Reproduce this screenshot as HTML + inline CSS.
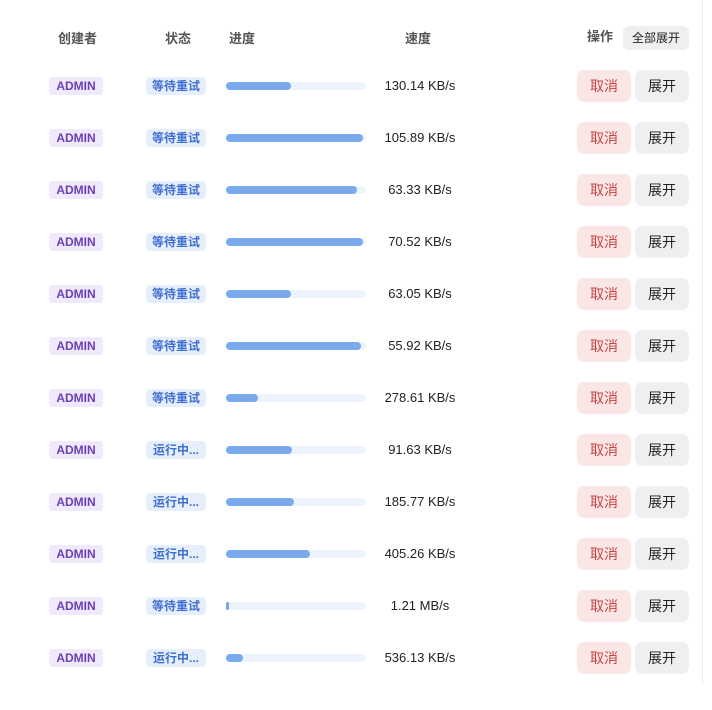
<!DOCTYPE html>
<html><head><meta charset="utf-8"><style>
body{margin:0;width:712px;height:685px;background:#fff;font-family:"Liberation Sans","Noto Sans CJK SC",sans-serif;position:relative;overflow:hidden}
.vl{position:absolute;left:702px;top:0;width:1px;height:685px;background:#f0f0f2}
.h{position:absolute;top:31px;font-size:13px;color:#555;font-weight:bold;line-height:16px}
.hb{position:absolute;left:623px;top:26px;width:66px;height:24px;border-radius:6px;background:#eeeff1;font-size:12px;color:#222;text-align:center;line-height:24px}
.r{position:absolute;left:0;width:712px;height:52px}
.ad{position:absolute;left:49px;top:-9px;width:54px;height:18px;border-radius:4px;background:#efe9fb;color:#6a40b5;font-size:12px;font-weight:bold;text-align:center;line-height:18px}
.st{position:absolute;left:146px;top:-9px;width:60px;height:18px;border-radius:4px;background:#e7effd;color:#3d6fd1;font-size:12px;font-weight:bold;text-align:center;line-height:18px}
.tr{position:absolute;left:226px;top:-4px;width:140px;height:8px;border-radius:4px;background:#eef4fd}
.fl{height:8px;border-radius:4px;background:#7aa9ec}
.sp{position:absolute;left:360px;width:120px;top:-9px;text-align:center;font-size:13px;color:#222;line-height:18px}
.c{position:absolute;left:577px;top:-16px;width:54px;height:32px;border-radius:7px;background:#fbe6e6;color:#c94444;font-size:14px;text-align:center;line-height:32px}
.e{position:absolute;left:635px;top:-16px;width:54px;height:32px;border-radius:7px;background:#eeeff1;color:#222;font-size:14px;text-align:center;line-height:32px}
</style></head><body>
<div class="vl"></div>
<div class="h" style="left:58px">创建者</div>
<div class="h" style="left:165px">状态</div>
<div class="h" style="left:229px">进度</div>
<div class="h" style="left:405px">速度</div>
<div class="h" style="left:587px;top:29px">操作</div>
<div class="hb">全部展开</div>

<div class="r" style="top:86px"><div class="ad">ADMIN</div><div class="st">等待重试</div><div class="tr"><div class="fl" style="width:65px"></div></div><div class="sp">130.14 KB/s</div><div class="c">取消</div><div class="e">展开</div></div>
<div class="r" style="top:138px"><div class="ad">ADMIN</div><div class="st">等待重试</div><div class="tr"><div class="fl" style="width:137px"></div></div><div class="sp">105.89 KB/s</div><div class="c">取消</div><div class="e">展开</div></div>
<div class="r" style="top:190px"><div class="ad">ADMIN</div><div class="st">等待重试</div><div class="tr"><div class="fl" style="width:131px"></div></div><div class="sp">63.33 KB/s</div><div class="c">取消</div><div class="e">展开</div></div>
<div class="r" style="top:242px"><div class="ad">ADMIN</div><div class="st">等待重试</div><div class="tr"><div class="fl" style="width:137px"></div></div><div class="sp">70.52 KB/s</div><div class="c">取消</div><div class="e">展开</div></div>
<div class="r" style="top:294px"><div class="ad">ADMIN</div><div class="st">等待重试</div><div class="tr"><div class="fl" style="width:65px"></div></div><div class="sp">63.05 KB/s</div><div class="c">取消</div><div class="e">展开</div></div>
<div class="r" style="top:346px"><div class="ad">ADMIN</div><div class="st">等待重试</div><div class="tr"><div class="fl" style="width:135px"></div></div><div class="sp">55.92 KB/s</div><div class="c">取消</div><div class="e">展开</div></div>
<div class="r" style="top:398px"><div class="ad">ADMIN</div><div class="st">等待重试</div><div class="tr"><div class="fl" style="width:32px"></div></div><div class="sp">278.61 KB/s</div><div class="c">取消</div><div class="e">展开</div></div>
<div class="r" style="top:450px"><div class="ad">ADMIN</div><div class="st">运行中...</div><div class="tr"><div class="fl" style="width:66px"></div></div><div class="sp">91.63 KB/s</div><div class="c">取消</div><div class="e">展开</div></div>
<div class="r" style="top:502px"><div class="ad">ADMIN</div><div class="st">运行中...</div><div class="tr"><div class="fl" style="width:68px"></div></div><div class="sp">185.77 KB/s</div><div class="c">取消</div><div class="e">展开</div></div>
<div class="r" style="top:554px"><div class="ad">ADMIN</div><div class="st">运行中...</div><div class="tr"><div class="fl" style="width:84px"></div></div><div class="sp">405.26 KB/s</div><div class="c">取消</div><div class="e">展开</div></div>
<div class="r" style="top:606px"><div class="ad">ADMIN</div><div class="st">等待重试</div><div class="tr"><div class="fl" style="width:3px"></div></div><div class="sp">1.21 MB/s</div><div class="c">取消</div><div class="e">展开</div></div>
<div class="r" style="top:658px"><div class="ad">ADMIN</div><div class="st">运行中...</div><div class="tr"><div class="fl" style="width:17px"></div></div><div class="sp">536.13 KB/s</div><div class="c">取消</div><div class="e">展开</div></div>
</body></html>
